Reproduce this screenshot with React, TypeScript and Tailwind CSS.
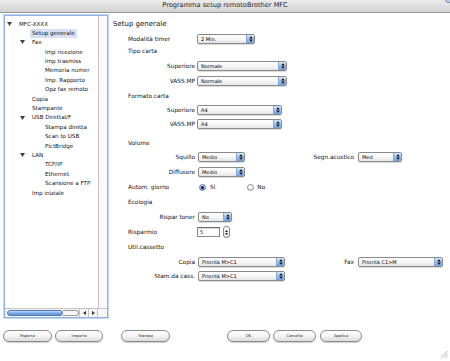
import React from "react";

type TreeItem = { label: string; level: number; tri?: boolean; sel?: boolean };

const tree: TreeItem[] = [
  { label: "MFC-XXXX", level: 0, tri: true },
  { label: "Setup generale", level: 1, sel: true },
  { label: "Fax", level: 1, tri: true },
  { label: "Imp ricezione", level: 2 },
  { label: "Imp trasmiss", level: 2 },
  { label: "Memoria numer", level: 2 },
  { label: "Imp. Rapporto", level: 2 },
  { label: "Opz fax remoto", level: 2 },
  { label: "Copia", level: 1 },
  { label: "Stampante", level: 1 },
  { label: "USB Direttal/F", level: 1, tri: true },
  { label: "Stampa diretta", level: 2 },
  { label: "Scan to USB", level: 2 },
  { label: "PictBridge", level: 2 },
  { label: "LAN", level: 1, tri: true },
  { label: "TCP/IP", level: 2 },
  { label: "Ethernet", level: 2 },
  { label: "Scansione a FTP", level: 2 },
  { label: "Imp iniziale", level: 1 },
];

function Tri() {
  return (
    <svg width="5" height="4" viewBox="0 0 5 4" className="block">
      <path d="M0 0 L5 0 L2.5 4 Z" fill="#404040" />
    </svg>
  );
}

function Arrows() {
  return (
    <svg width="4" height="6" viewBox="0 0 4 6" className="block">
      <path d="M0.2 2.4 L2 0.3 L3.8 2.4 Z" fill="#111" />
      <path d="M0.2 3.6 L2 5.7 L3.8 3.6 Z" fill="#111" />
    </svg>
  );
}

function Select({ w, value }: { w: string; value: string }) {
  return (
    <div
      className={`${w} h-[10px] flex border border-[#8a8a8a] rounded-[2px] bg-gradient-to-b from-white via-[#f7f7f7] to-[#e4e4e4] overflow-hidden shadow-[0_1px_1px_rgba(0,0,0,0.15)]`}
    >
      <span className="flex-1 pl-[3px] text-[5px] leading-[8px] text-black whitespace-nowrap">{value}</span>
      <span className="w-[8px] bg-gradient-to-b from-[#d6e6fa] via-[#9cc1ef] to-[#6b9fe2] border-l border-[#8aa6cf] flex items-center justify-center">
        <Arrows />
      </span>
    </div>
  );
}

function Label({ children, right }: { children: React.ReactNode; right?: boolean }) {
  return (
    <div className={`w-[67px] shrink-0 whitespace-nowrap ${right ? "text-right" : "text-left"}`}>{children}</div>
  );
}

function Button({ w, label, ml }: { w: string; label: string; ml: string }) {
  return (
    <div
      className={`${w} ${ml} h-[12px] rounded-full border border-[#8c8c8c] bg-gradient-to-b from-white via-[#f4f4f4] to-[#dcdcdc] shadow-[0_1px_1px_rgba(0,0,0,0.2)] flex items-center justify-center text-[3.8px] text-[#222]`}
    >
      {label}
    </div>
  );
}

function Radio({ on }: { on?: boolean }) {
  return on ? (
    <div className="w-[7px] h-[7px] rounded-full border border-[#5a7fb5] bg-gradient-to-b from-[#cfe2fa] to-[#6b9fe2] flex items-center justify-center">
      <div className="w-[3px] h-[3px] rounded-full bg-[#1a1a1a]" />
    </div>
  ) : (
    <div className="w-[7px] h-[7px] rounded-full border border-[#8a8a8a] bg-gradient-to-b from-white to-[#e6e6e6]" />
  );
}

export default function App() {
  return (
    <div className="w-[450px] h-[361px] bg-white relative overflow-hidden font-['DejaVu_Sans',sans-serif] text-[#111]">
      {/* title bar */}
      <div className="h-[13px] bg-gradient-to-b from-[#ececec] to-[#d2d2d2] border-b border-[#9a9a9a] flex items-center justify-center text-[6.6px] text-[#222] relative">
        Programma setup remotoBrother MFC
        <div className="absolute right-[-3px] top-[-3px] w-[8px] h-[6px] rounded-full bg-gradient-to-b from-[#e8eef8] to-[#a9bfdc] border border-[#8a9ab5]" />
      </div>

      <div className="flex items-start pt-[2px]">
        {/* sidebar */}
        <div className="ml-[4px] w-[104px] h-[303px] border border-[#8fb2e2] shadow-[0_0_0_1px_#c5d8f2] bg-white flex flex-col">
          <div className="flex flex-1 min-h-0">
            <div className="flex-1 pt-[3px]">
              {tree.map((t, i) => (
                <div
                  key={i}
                  className={`h-[9.4px] flex items-center text-[5.6px] whitespace-nowrap ${
                    t.level === 0 ? "pl-[2px]" : t.level === 1 ? "pl-[15px]" : "pl-[28px]"
                  }`}
                >
                  <div className="w-[12px] shrink-0 flex items-center">{t.tri ? <Tri /> : null}</div>
                  <span className={t.sel ? "bg-[#d7e1f1] px-[2px] -ml-[2px] leading-[9px]" : ""}>{t.label}</span>
                </div>
              ))}
            </div>
            <div className="w-[9px] border-l border-[#c4c4c4] bg-gradient-to-r from-[#f4f4f4] to-[#fdfdfd]" />
          </div>
          {/* horizontal scrollbar */}
          <div className="h-[9px] flex border-t border-[#c4c4c4] bg-gradient-to-b from-[#f3f3f3] to-[#fbfbfb]">
            <div className="w-[74px] flex items-center pl-[2px] relative">
              <div className="w-[56px] h-[6px] rounded-full border border-[#4d79b7] bg-gradient-to-b from-[#c6dcf7] via-[#7eaae6] to-[#5e93dc]" />
              <div className="absolute right-0 top-[1px] w-[16px] h-[6px] rounded-r-full border border-l-0 border-[#9a9a9a]" />
            </div>
            <div className="w-[9px] border-l border-[#c4c4c4] flex items-center justify-center">
              <svg width="3" height="4" viewBox="0 0 3 4"><path d="M3 0 L0 2 L3 4Z" fill="#333" /></svg>
            </div>
            <div className="w-[9px] border-l border-[#c4c4c4] flex items-center justify-center">
              <svg width="3" height="4" viewBox="0 0 3 4"><path d="M0 0 L3 2 L0 4Z" fill="#333" /></svg>
            </div>
            <div className="flex-1 border-l border-[#c4c4c4] bg-[#f6f6f6]" />
          </div>
        </div>

        {/* content */}
        <div className="ml-[5px] flex-1 flex flex-col text-[5.8px]">
          <div className="h-[10px] mt-[4px] flex items-center text-[7px]">Setup generale</div>

          <div className="h-[10px] mt-[5px] flex items-center pl-[15px]">
            <Label>Modalità timer</Label>
            <div className="ml-[2px]"><Select w="w-[58px]" value="2 Min." /></div>
          </div>
          <div className="h-[10px] mt-[2px] flex items-center pl-[15px]">
            <Label>Tipo carta</Label>
          </div>
          <div className="h-[10px] mt-[5px] flex items-center pl-[15px]">
            <Label right>Superiore</Label>
            <div className="ml-[2px]"><Select w="w-[90px]" value="Normale" /></div>
          </div>
          <div className="h-[10px] mt-[5px] flex items-center pl-[15px]">
            <Label right>VASS.MP</Label>
            <div className="ml-[2px]"><Select w="w-[90px]" value="Normale" /></div>
          </div>
          <div className="h-[10px] mt-[5px] flex items-center pl-[15px]">
            <Label>Formato carta</Label>
          </div>
          <div className="h-[10px] mt-[4px] flex items-center pl-[15px]">
            <Label right>Superiore</Label>
            <div className="ml-[2px]"><Select w="w-[85px]" value="A4" /></div>
          </div>
          <div className="h-[10px] mt-[4px] flex items-center pl-[15px]">
            <Label right>VASS.MP</Label>
            <div className="ml-[2px]"><Select w="w-[85px]" value="A4" /></div>
          </div>
          <div className="h-[10px] mt-[9px] flex items-center pl-[15px]">
            <Label>Volume</Label>
          </div>
          <div className="h-[10px] mt-[4px] flex items-center pl-[15px]">
            <Label right>Squillo</Label>
            <div className="ml-[3px]"><Select w="w-[47px]" value="Medio" /></div>
            <div className="w-[109px] text-right whitespace-nowrap">Segn.acustico</div>
            <div className="ml-[4px]"><Select w="w-[44px]" value="Med" /></div>
          </div>
          <div className="h-[10px] mt-[5px] flex items-center pl-[15px]">
            <Label right>Diffusore</Label>
            <div className="ml-[3px]"><Select w="w-[47px]" value="Medio" /></div>
          </div>
          <div className="h-[10px] mt-[5px] flex items-center pl-[15px]">
            <Label>Autom. giorno</Label>
            <div className="ml-[4px] flex items-center">
              <Radio on />
              <span className="ml-[4px]">Sì</span>
              <div className="ml-[32px]"><Radio /></div>
              <span className="ml-[3px]">No</span>
            </div>
          </div>
          <div className="h-[10px] mt-[5px] flex items-center pl-[15px]">
            <Label>Ecologia</Label>
          </div>
          <div className="h-[10px] mt-[5px] flex items-center pl-[15px]">
            <Label right>Rispar toner</Label>
            <div className="ml-[3px]"><Select w="w-[34px]" value="No" /></div>
          </div>
          <div className="h-[10px] mt-[5px] flex items-center pl-[15px]">
            <Label>Risparmio</Label>
            <div className="ml-[2px] w-[23px] h-[10px] border border-[#8a8a8a] border-t-[#6a6a6a] bg-white pl-[2px] text-[5px] leading-[8px] shadow-[inset_0_1px_1px_rgba(0,0,0,0.15)]">
              5
            </div>
            <div className="ml-[3px] w-[7px] h-[12px] rounded-[3px] border border-[#8a8a8a] bg-gradient-to-b from-white to-[#e2e2e2] flex flex-col items-center justify-center gap-[1px]">
              <svg width="3" height="2" viewBox="0 0 3 2"><path d="M0 2 L1.5 0 L3 2Z" fill="#222" /></svg>
              <svg width="3" height="2" viewBox="0 0 3 2"><path d="M0 0 L1.5 2 L3 0Z" fill="#222" /></svg>
            </div>
          </div>
          <div className="h-[10px] mt-[5px] flex items-center pl-[15px]">
            <Label>Util.cassetto</Label>
          </div>
          <div className="h-[10px] mt-[5px] flex items-center pl-[15px]">
            <Label right>Copia</Label>
            <div className="ml-[3px]"><Select w="w-[87px]" value="Priorità M>C1" /></div>
            <div className="w-[69px] text-right whitespace-nowrap">Fax</div>
            <div className="ml-[4px]"><Select w="w-[85px]" value="Priorità C1>M" /></div>
          </div>
          <div className="h-[10px] mt-[4px] flex items-center pl-[15px]">
            <Label right>Stam.da cass.</Label>
            <div className="ml-[3px]"><Select w="w-[87px]" value="Priorità M>C1" /></div>
          </div>
        </div>
      </div>

      {/* bottom buttons */}
      <div className="flex mt-[12px]">
        <Button w="w-[49px]" ml="ml-[3px]" label="Esporta" />
        <Button w="w-[48px]" ml="ml-[3px]" label="Importa" />
        <Button w="w-[49px]" ml="ml-[18px]" label="Stampa" />
        <Button w="w-[43px]" ml="ml-[57px]" label="OK" />
        <Button w="w-[43px]" ml="ml-[3px]" label="Cancella" />
        <Button w="w-[42px]" ml="ml-[4px]" label="Applica" />
      </div>

      {/* resize grip */}
      <svg className="absolute right-[2px] bottom-[3px]" width="8" height="8" viewBox="0 0 8 8">
        <path d="M7.5 1 L1 7.5 M7.5 4 L4 7.5 M7.5 6.5 L6.5 7.5" stroke="#9a9a9a" strokeWidth="0.8" />
      </svg>
    </div>
  );
}
